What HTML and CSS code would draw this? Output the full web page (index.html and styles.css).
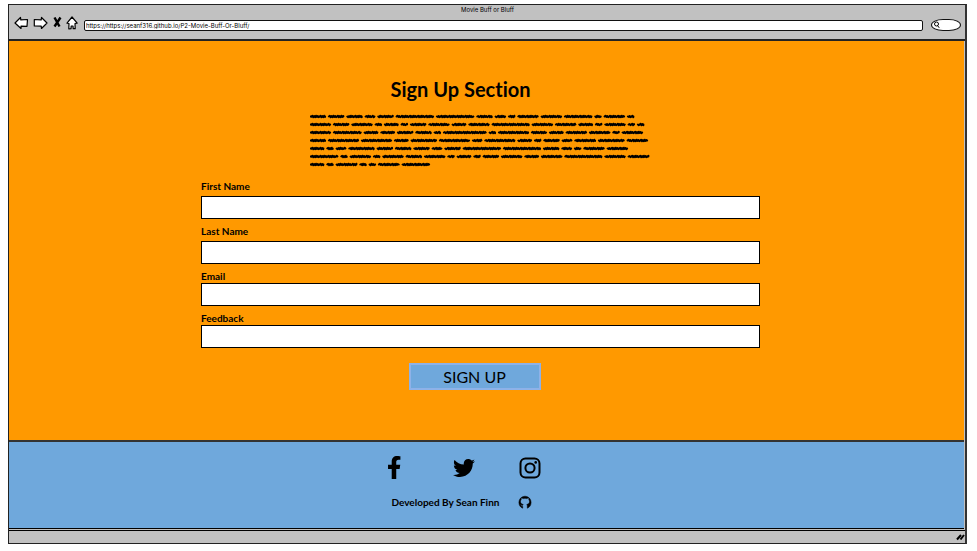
FILE: index.html
```html
<!DOCTYPE html>
<html lang="en">
<head>
<meta charset="utf-8">
<title>Movie Buff or Bluff</title>
<link rel="stylesheet" href="styles.css">
</head>
<body>
<div class="window">
  <header class="toolbar">
    <div class="window-title">Movie Buff or Bluff</div>
    <div class="controls">
      <button type="button" class="icon-button" aria-label="Back"><svg width="15" height="14" viewBox="0 0 15 14"><path d="M1 7 6.500 1.500 6.800 3.800 13.500 3.500 13 10.300 7 10.200 7 12.500Z" class="outline"/></svg></button>
      <button type="button" class="icon-button" aria-label="Forward"><svg width="15" height="14" viewBox="0 0 15 14"><path d="M14 7 8.500 1.500 8.200 3.800 1.300 3.500 1.300 10 8.200 10.200 8.500 12.500Z" class="outline"/></svg></button>
      <button type="button" class="icon-button" aria-label="Stop"><svg width="10" height="14" viewBox="0 0 10 14"><path d="M2.500 1.500 7.500 10.500M8.500 1.500 2.500 10.500" class="cross"/></svg></button>
      <button type="button" class="icon-button" aria-label="Home"><svg width="12" height="14" viewBox="0 0 12 14"><path d="M6 1 1 7.200 3 7.500 2.800 12.800 5 12.600 5.200 10 7 10 7.200 12.700 9.200 12.700 9 7.500 11.200 7.200Z" class="outline"/></svg></button>
      <input class="address" type="text" aria-label="Address" value="https://https://seanf316.github.io/P2-Movie-Buff-Or-Bluff/">
      <label class="search"><svg width="7" height="8" viewBox="0 0 7 8"><circle cx="3.500" cy="3" r="2" class="lens"/><path d="M4.500 4.500 6.200 6.800" class="lens"/></svg><input type="search" aria-label="Search"></label>
    </div>
  </header>
  <main class="page">
    <h1>Sign Up Section</h1>
    <div class="copy" role="img" aria-label="Placeholder paragraph"></div>
    <form class="form">
      <div class="field"><label for="first">First Name</label><input id="first" type="text"></div>
      <div class="field"><label for="last">Last Name</label><input id="last" type="text"></div>
      <div class="field compact"><label for="email">Email</label><input id="email" type="email"></div>
      <div class="field compact"><label for="feedback">Feedback</label><input id="feedback" type="text"></div>
      <button type="submit" class="submit">SIGN UP</button>
    </form>
  </main>
  <footer class="footer">
    <div class="footer-content">
      <nav class="social">
        <a href="#" aria-label="Facebook"><svg width="13" height="23" viewBox="22 0 288 512" preserveAspectRatio="none"><path d="M279.140 288l14.220-92.660h-88.910v-60.130c0-25.350 12.420-50.060 52.240-50.060h40.420V6.260S260.430 0 225.360 0c-73.220 0-121.080 44.380-121.080 124.720v70.620H22.890V288h81.390v224h100.170V288z"/></svg></a>
        <a href="#" aria-label="Twitter"><svg width="22" height="22" viewBox="0 0 512 512"><path d="M459.370 151.716c.325 4.548.325 9.097.325 13.645 0 138.720-105.583 298.558-298.558 298.558-59.452 0-114.680-17.219-161.137-47.106 8.447.974 16.568 1.299 25.340 1.299 49.055 0 94.213-16.568 130.274-44.832-46.132-.975-84.792-31.188-98.112-72.772 6.498.974 12.995 1.624 19.818 1.624 9.421 0 18.843-1.300 27.614-3.573-48.081-9.747-84.143-51.980-84.143-102.985v-1.299c13.969 7.797 30.214 12.670 47.431 13.319-28.264-18.843-46.781-51.005-46.781-87.391 0-19.492 5.197-37.360 14.294-52.954 51.655 63.675 129.300 105.258 216.365 109.807-1.624-7.797-2.599-15.918-2.599-24.040 0-57.828 46.782-104.934 104.934-104.934 30.213 0 57.502 12.670 76.670 33.137 23.715-4.548 46.456-13.320 66.599-25.340-7.798 24.366-24.366 44.833-46.132 57.827 21.117-2.273 41.584-8.122 60.426-16.243-14.292 20.791-32.161 39.308-52.628 54.253z"/></svg></a>
        <a href="#" aria-label="Instagram"><svg width="22" height="22" viewBox="0 0 22 22"><rect x="1.500" y="1.500" width="19" height="19" rx="5" class="line"/><circle cx="11" cy="11" r="4.600" class="line"/><circle cx="16.700" cy="5.400" r="1.300"/></svg></a>
      </nav>
      <div class="credit">
        <span>Developed By Sean Finn</span>
        <a href="#" aria-label="GitHub"><svg width="14" height="14" viewBox="0 0 14 14"><path d="M4.700 13.200C2.300 12.300.9 10.200.9 7.300A6.100 6.100 0 0 1 13.100 7.300C13.100 10.200 11.700 12.300 9.300 13.200V10.800C9.300 10.200 9.100 9.700 8.800 9.400C10.500 9.200 11.500 8.200 11.500 6.600C11.500 5.800 11.300 5.200 10.800 4.700C11 4.200 11 3.500 10.700 2.900C10 2.900 9.400 3.200 8.900 3.600A7 7 0 0 0 5.100 3.600C4.600 3.200 4 2.900 3.300 2.900C3 3.500 3 4.200 3.200 4.700C2.700 5.200 2.500 5.800 2.500 6.600C2.500 8.200 3.500 9.200 5.200 9.400C4.900 9.600 4.800 9.900 4.700 10.300C3.900 10.600 3.400 10.200 3 9.600L2.300 9.200C3 10 3.100 11.400 4.700 11.400Z" class="github"/></svg></a>
      </div>
    </div>
  </footer>
  <div class="statusbar"><svg width="9" height="8" viewBox="0 0 9 8"><path d="M1 6.500 5 2M4.500 6.500 8 2" class="grip"/></svg></div>
</div>
<script src="script.js"></script>
</body>
</html>
```
FILE: styles.css
```css
* { box-sizing: border-box; }

body {
  margin: 0;
  padding: 4px 10px 7px 8px;
  min-height: 100vh;
  display: flex;
  background: #fff;
  color: #000;
  font-family: Lato, "Liberation Sans", sans-serif;
  font-variant-ligatures: none;
}

svg { display: block; }
a { color: inherit; }

.window {
  flex: 1;
  display: flex;
  flex-direction: column;
  border: 1px solid #222;
  border-right: 2px solid #333;
  background: #c1c1c1;
}

.toolbar {
  padding: 0 4px 8px 5px;
  border-bottom: 2px solid #222;
}

.window-title {
  font: 6px/10px Inter, sans-serif;
  text-align: center;
}

.controls {
  display: flex;
  align-items: center;
  gap: 4px;
}

.icon-button {
  padding: 0;
  border: 0;
  background: none;
}

.outline { fill: #fff; stroke: #000; stroke-width: 1.2; stroke-linejoin: round; }
.cross { fill: none; stroke: #000; stroke-width: 2.4; }
.lens { fill: none; stroke: #000; stroke-width: 1; }
.line { fill: none; stroke: #000; stroke-width: 2; }
.github { fill: #000; stroke: #000; stroke-width: .5; }
.grip { fill: none; stroke: #000; stroke-width: 2; }

.address {
  flex: 1;
  min-width: 0;
  height: 11px;
  margin: 4px 4px 0 2px;
  padding: 0 1px;
  border: 1px solid #111;
  border-radius: 2px;
  background: #fff;
  color: #000;
  font: 6px/8px Inter, sans-serif;
}

.search {
  display: flex;
  align-items: center;
  width: 30px;
  height: 12px;
  margin-top: 4px;
  padding: 0 1px;
  border: 1px solid #111;
  border-radius: 12px / 6px;
  background: #fff;
}

.search svg { flex: none; }

.search input {
  min-width: 0;
  width: 100%;
  height: 8px;
  padding: 0;
  border: 0;
  background: none;
  appearance: none;
}

.page {
  flex: 1;
  display: flex;
  flex-direction: column;
  align-items: center;
  padding: 36px 12px 0 0;
  margin-right: 1px;
  background: #ff9900;
}

h1 {
  margin: 0;
  padding-right: 40px;
  font-size: 20px;
  line-height: 24px;
  font-weight: 700;
}

.copy {
  width: 342px;
  margin-top: 12px;
}

.squiggle { fill: none; stroke: #000; stroke-width: 2; stroke-linejoin: round; stroke-linecap: round; }

.form {
  display: flex;
  flex-direction: column;
  gap: 5px;
  width: 100%;
  max-width: 559px;
  margin-top: 10px;
}

.field {
  display: flex;
  flex-direction: column;
  gap: 3px;
}

.compact { gap: 0; }

.field label {
  font-size: 10px;
  line-height: 14px;
  font-weight: 700;
}

.field input {
  height: 23px;
  padding: 0 6px;
  border: 1px solid #000;
  background: #fff;
  font: 12px Lato, sans-serif;
}

.submit {
  align-self: center;
  width: 132px;
  height: 27px;
  margin: 10px 12px 0 0;
  padding: 0;
  border: 2px solid #8eb2e8;
  background: #6fa8dc;
  color: #000;
  font: 16px Lato, sans-serif;
}

.footer {
  display: flex;
  justify-content: center;
  margin-right: 1px;
  padding: 14px 46px 14px 0;
  border-top: 2px solid #333;
  border-bottom: 1px solid #000;
  background: #6fa8dc;
}

.footer-content { width: 152px; }

.social {
  display: grid;
  grid-template-columns: 65px 66px 22px;
  align-items: center;
}

.credit {
  display: flex;
  align-items: center;
  justify-content: space-between;
  margin-top: 11px;
  padding: 0 8px 0 4px;
  font-size: 10px;
  line-height: 24px;
  font-weight: 700;
}

.statusbar {
  display: flex;
  justify-content: flex-end;
  align-items: center;
  height: 13px;
  margin-top: 1px;
  border-top: 1px solid #000;
}
```
FILE: script.js
```js
// Word widths of the scribbled placeholder paragraph, in thirds of a pixel.
const lines = [
  [47, 47, 47, 30, 47, 113, 113, 47, 32, 20, 62, 62, 83, 20, 62, 20],
  [62, 47, 62, 20, 42, 20, 47, 62, 42, 62, 112, 62, 62, 42, 20, 62, 20, 20],
  [62, 84, 42, 42, 47, 47, 20, 129, 20, 91, 46, 42, 62, 62, 20, 62],
  [47, 91, 91, 42, 77, 91, 29, 91, 42, 20, 47, 30, 63, 78, 62],
  [42, 20, 30, 77, 47, 47, 47, 30, 47, 113, 112, 47, 30, 20, 62, 62],
  [84, 20, 62, 20, 62, 47, 62, 20, 42, 20, 47, 62, 42, 62, 112, 62, 63],
  [42, 20, 63, 20, 20, 63, 83]
];
const heights = [0.2, -0.7, 0.7, -0.5, 0.8, -0.8, 0.5, -0.5, 0.7];
let d = "";
lines.forEach((words, row) => {
  let x = 0.6;
  const y = row * 8 + 3.5;
  words.forEach((width, index) => {
    const end = x + width / 3 - 1.2;
    d += `M${x.toFixed(1)} ${y}`;
    let step = index;
    for (let px = x + 0.9; px < end; px += 0.9) {
      d += `L${px.toFixed(1)} ${(y + heights[step++ % heights.length]).toFixed(1)}`;
    }
    d += `L${end.toFixed(1)} ${y}`;
    x += (width + 8) / 3;
  });
});
document.querySelector(".copy").innerHTML =
  `<svg width="100%" viewBox="0 0 342 56"><path class="squiggle" d="${d}"/></svg>`;
```
